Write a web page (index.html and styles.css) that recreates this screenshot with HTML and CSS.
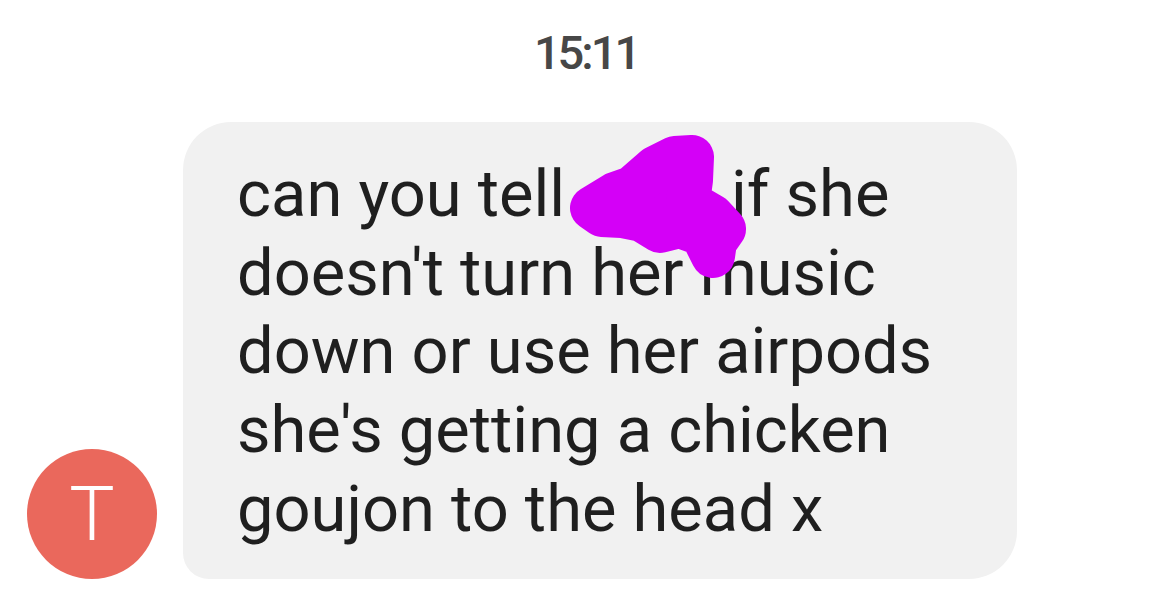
FILE: index.html
```html
<!DOCTYPE html>
<html>
<head>
<meta charset="utf-8">
<link rel="stylesheet" href="styles.css">
</head>
<body>
<div class="thread">
  <div class="time">15:11</div>
  <div class="row">
    <div class="avatar">T</div>
    <div class="bubble">
      <span class="line">can you tell<span class="hidden-name"></span>if she</span>
      <span class="line">doesn't turn her music</span>
      <span class="line">down or use her airpods</span>
      <span class="line">she's getting a chicken</span>
      <span class="line">goujon to the head x</span>
      <svg class="scribble" width="200" height="160" viewBox="0 0 200 160">
        <path fill="#d400f7" stroke="#d400f7" stroke-width="44" stroke-linejoin="round" stroke-linecap="round"
          d="M32 78 L55 64 L72 58 L95 38 L115 28 L132 27 L131 50 L128 72 L152 86 L164 99 L155 112 L153 126 L142 104 L120 96 L100 101 L82 90 L62 86 L42 85 Z"/>
      </svg>
    </div>
  </div>
</div>
</body>
</html>
```
FILE: styles.css
```css
html, body {
  margin: 0;
  padding: 0;
  background: #ffffff;
}
.thread {
  width: 1174px;
  height: 600px;
  font-family: Roboto, "Noto Sans", sans-serif;
}
.time {
  text-align: center;
  padding-top: 29px;
  font-size: 47px;
  line-height: 48px;
  font-weight: 500;
  letter-spacing: -3px;
  color: #474747;
  padding-right: 2px;
}
.row {
  display: flex;
  align-items: flex-end;
  gap: 26px;
  padding-left: 27px;
  margin-top: 45px;
}
.avatar {
  width: 130px;
  height: 130px;
  border-radius: 50%;
  background: #ea685c;
  color: #ffffff;
  display: flex;
  align-items: center;
  justify-content: center;
  font-size: 76px;
  font-weight: 300;
  line-height: 1;
  flex-shrink: 0;
}
.bubble {
  position: relative;
  width: 834px;
  box-sizing: border-box;
  padding: 33px 40px 30px 54px;
  background: #f1f1f1;
  border-radius: 48px 48px 48px 26px;
  font-size: 65px;
  line-height: 78.7px;
  color: #1f1f1f;
}
.line {
  display: block;
  white-space: nowrap;
}
.hidden-name {
  display: inline-block;
  width: 166px;
}
.scribble {
  position: absolute;
  left: 377px;
  top: 8px;
}
```
